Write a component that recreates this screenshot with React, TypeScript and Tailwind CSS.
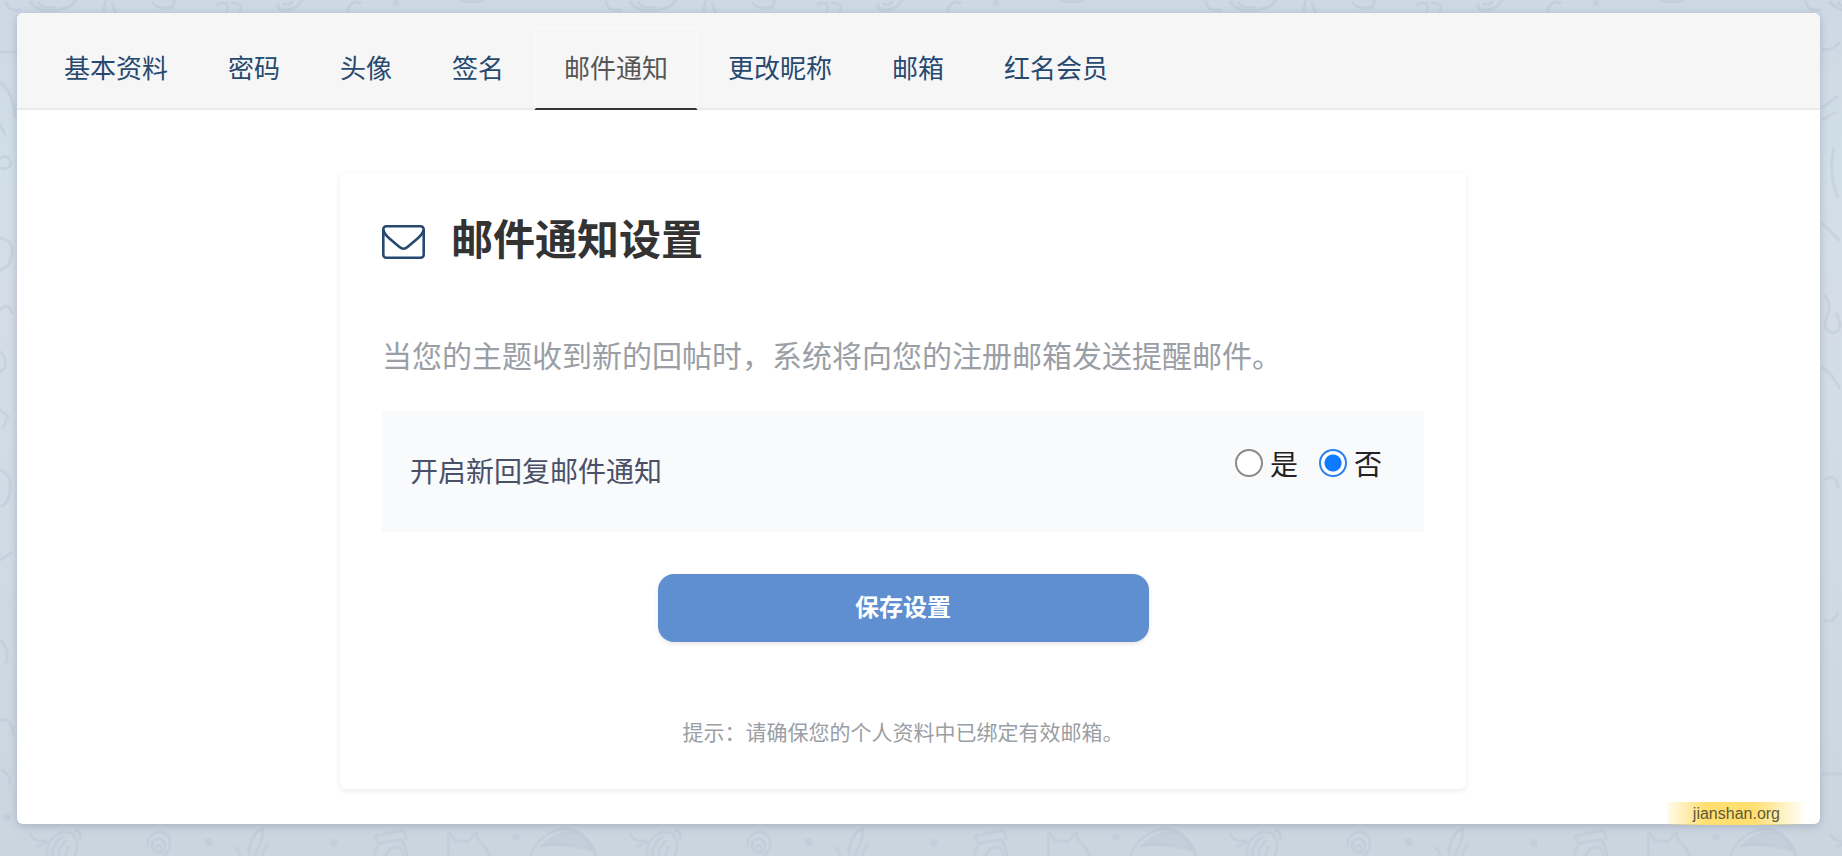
import { useState } from "react";

const tabs = ["基本资料", "密码", "头像", "签名", "邮件通知", "更改昵称", "邮箱", "红名会员"];

function Doodles() {
  return (
    <svg aria-hidden="true" className="absolute inset-0 h-full w-full">
      <defs>
        <linearGradient id="sky" x1="0" y1="0" x2="0" y2="1">
          <stop offset="0" stopColor="#ccd8e3" />
          <stop offset="0.2" stopColor="#d1dfe7" />
          <stop offset="0.35" stopColor="#d4dde5" />
          <stop offset="0.6" stopColor="#cfdce5" />
          <stop offset="1" stopColor="#cad6df" />
        </linearGradient>
        <pattern id="doodles" width="600" height="856" patternUnits="userSpaceOnUse">
          <g fill="none" stroke="#b3becd" strokeOpacity="0.32" strokeWidth="3" strokeLinecap="round" strokeLinejoin="round">
            <path d="M30 834q5 9 17 7M38 846q6-2 8-3M47 856c-1-14 8-24 19-24 10 0 14 12 9 24M52 856q1-15 11-19M59 856q0-10 7-15M66 856q0-6 3-9M76 830q6 4 4 9" />
            <path d="M148 846c-3-16 22-20 22-3 0 7-3 10-6 13M153 850c-5-13 12-15 12-4 0 8-10 9-9 2 1-4 5-3 5 0" />
            <path d="M249 854c0-11 5-22 13-25 4 3-2 15-7 25M236 848q4 3 4 8M268 845q-5 4-5 11" />
            <path d="M375 836l28-6 4 9-29 4zM380 844q-6 5-6 12M402 841q5 8 5 15M386 856q2-9 11-9 7 2 6 9" />
            <path d="M449 856c-2-9-1-16 0-23l8 9q7-2 11 0l8-9q2 8 8 12l6 11" />
            <path d="M531 856q4-16 19-23 18-9 34 3 9 8 12 20M541 846q18-4 50 4" />
            <path d="M6 2q2 10 14 8M30 2q10 12 28 8t18-12M38 3q6 6 16 4M106 0l-3 12M112 3l3 9M153 3q5 6 14 5t7-8M218 4q12-4 9 7M232 3q12 0 8 9M278 5q0 7 10 5t14-10M284 4q6 2 8-2M347 11q5-12 13-8M460 0q12 4 24 0" />
            <path d="M0 52h16M0 82q14 12 15 35M0 125l5 9M1 158a6 6 0 1 1 1 10M0 238q14 2 12 16T0 270M0 310q8-9 12 3M0 352q7 6 5 16l-5 4M0 410l8 6-5 12M0 470q12 4 10 20T0 506M0 560l11-7M0 640q10 8 6 22M0 720q12-2 13 14M2 770q8 4 8 14" />
          </g>
          <g fill="#b3becd" fillOpacity="0.32">
            <circle cx="209" cy="842" r="4" />
            <circle cx="334" cy="843" r="4" />
            <circle cx="516" cy="837" r="4" />
            <circle cx="396" cy="3" r="3" />
            <circle cx="7" cy="817" r="4" />
            <path d="M541 846q16-18 34-14 14 5 20 18-28-8-54-4z" />
          </g>
        </pattern>
      </defs>
      <rect width="100%" height="100%" fill="url(#sky)" />
      <rect width="100%" height="100%" fill="url(#doodles)" />
      <svg x="100%" overflow="visible">
        <path
          d="M-20 50q10 1 18-8M-20 108l16-12M-20 120l14-8M-8 148q-6 24 4 50M-20 223l18 18M-18 295q9 9 3 22t7 16q11-4 2-20M-20 367q10 6 18 22M-18 480q12-8 14 8M-18 620q10 4 14-8M-20 774h20"
          fill="none"
          stroke="#b3becd"
          strokeOpacity="0.32"
          strokeWidth="3"
        />
      </svg>
    </svg>
  );
}

function EnvelopeIcon() {
  return (
    <svg aria-hidden="true" viewBox="0 0 43 34" className="mt-[2px] h-[34px] w-[43px]" fill="none" stroke="#27496f" strokeWidth="2.6">
      <rect x="1.3" y="1.3" width="40.4" height="31.4" rx="3" />
      <path d="M1.500 5C2 9 5 11.500 8 14L17.500 22Q21.500 25.500 25.500 22L35 14C38 11.500 41 9 41.500 5" />
    </svg>
  );
}

export default function App() {
  const [choice, setChoice] = useState("no");
  const options = [
    { value: "yes", label: "是" },
    { value: "no", label: "否" },
  ];

  return (
    <div
      lang="zh-CN"
      className="relative min-h-screen pt-[13px] pr-[22px] pb-8 pl-[17px] font-['Liberation_Sans','Noto_Sans_CJK_SC',sans-serif]"
    >
      <Doodles />
      <main className="relative rounded-md bg-white shadow-[0_2px_8px_rgba(90,90,130,0.3)]">
        <nav className="flex rounded-t-md border-b-2 border-[#e9ecec] bg-[#f6f6f6] px-[17px] pt-[14px]">
          {tabs.map((tab) => (
            <a
              key={tab}
              href="#"
              aria-current={tab === "邮件通知" ? "page" : undefined}
              className={
                tab === "邮件通知"
                  ? "-mb-[2px] rounded-t border-2 border-[#f9f9f9] border-b-[#333] px-7 pt-5 pb-[19px] text-[26px] leading-[40px] text-[#555]"
                  : "-mb-[2px] border-2 border-transparent px-7 pt-5 pb-[19px] text-[26px] leading-[40px] text-[#27496f]"
              }
            >
              {tab}
            </a>
          ))}
        </nav>

        <div className="flex justify-center pt-[63px] pr-[31px] pb-[35px]">
          <form
            onSubmit={(e) => e.preventDefault()}
            className="w-[1126px] rounded-md bg-white px-[42px] pt-[38px] pb-[39px] shadow-[0_2px_6px_rgba(0,0,0,0.08)]"
          >
            <h1 className="flex items-center gap-[26px] text-[42px] leading-[60px] font-bold text-[#333]">
              <EnvelopeIcon />
              邮件通知设置
            </h1>
            <p className="mt-16 text-[30px] leading-[44px] text-[#9a9ea5]">
              当您的主题收到新的回帖时，系统将向您的注册邮箱发送提醒邮件。
            </p>
            <fieldset className="mt-8 flex items-start justify-between bg-[#f8fafc] pt-8 pr-[42px] pb-[39px] pl-7">
              <span className="pt-[10px] text-[28px] leading-[40px] text-[#4a5068]">开启新回复邮件通知</span>
              <span className="flex gap-[21px] pt-[2px]">
                {options.map((o) => (
                  <label key={o.value} className="flex items-center gap-[7px] text-[28px] leading-[42px] text-[#222]">
                    <input
                      type="radio"
                      name="notify"
                      value={o.value}
                      checked={choice === o.value}
                      onChange={() => setChoice(o.value)}
                      className="mb-[6px] size-7 appearance-none rounded-full border-2 border-[#8a8a8a] bg-white checked:border-[#2a80ee] checked:bg-[radial-gradient(circle,#0d7aff_8px,#fff_9px)]"
                    />
                    {o.label}
                  </label>
                ))}
              </span>
            </fieldset>
            <button
              type="submit"
              className="mx-auto mt-[42px] block w-[491px] rounded-2xl bg-[#5f8fd0] py-[14px] text-2xl leading-[40px] font-bold text-white shadow-[0_2px_4px_rgba(0,0,0,0.1)]"
            >
              保存设置
            </button>
            <p className="mt-[74px] text-center text-[21px] leading-[34px] text-[#9a9ea5]">
              提示：请确保您的个人资料中已绑定有效邮箱。
            </p>
          </form>
        </div>

        <span className="absolute right-[14px] -bottom-px bg-[linear-gradient(90deg,#ffdf7020,#ffdf70_28%,#ffdf70_62%,#ffdf7000)] px-[26px] text-base leading-[23px] text-[#5f5a35]">
          jianshan.org
        </span>
      </main>
    </div>
  );
}
